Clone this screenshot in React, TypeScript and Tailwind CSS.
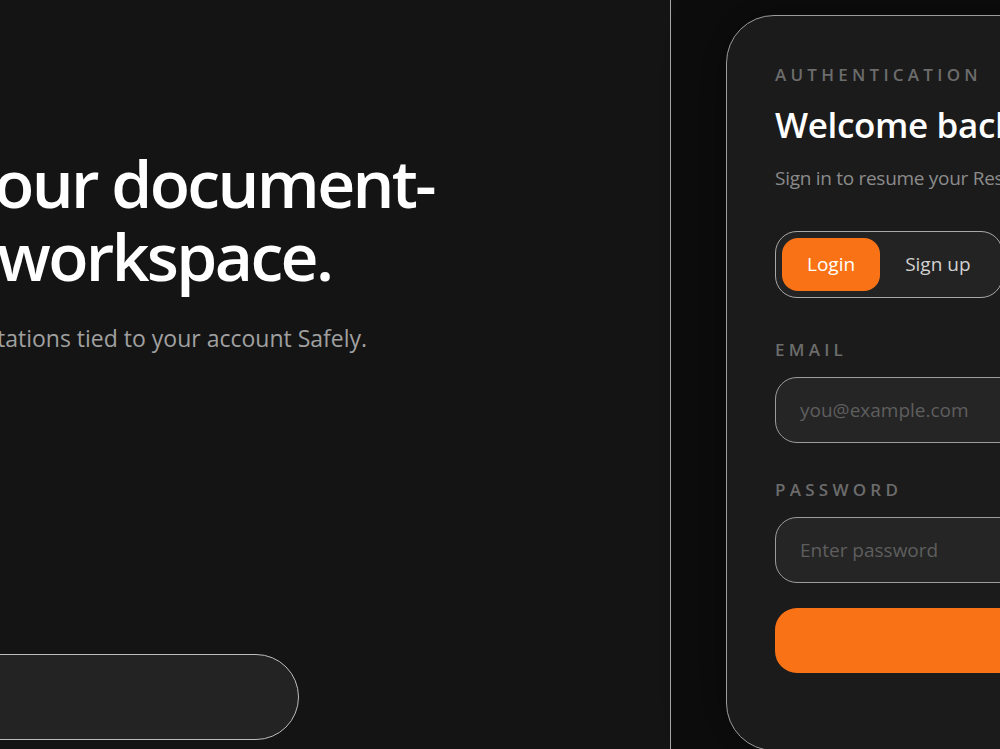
import type { ReactNode } from 'react';

const font = { fontFamily: '"Open Sans", "Noto Sans", sans-serif' };

// a line whose start runs off the left edge of the page
function Bleed({ hidden, children, className }: { hidden: string; children: ReactNode; className?: string }) {
  return (
    <div className={`flex whitespace-nowrap ${className ?? ''}`}>
      <span className="flex w-[420px] shrink-0 justify-end">{hidden}</span>
      <span>{children}</span>
    </div>
  );
}

function Label({ children }: { children: ReactNode }) {
  return (
    <p className="text-[17px] font-semibold uppercase leading-[20px] tracking-[0.25em] text-[#6c6c6c]">{children}</p>
  );
}

export default function App() {
  return (
    <div className="flex h-[749px] w-[1000px] overflow-hidden bg-[#0d0d0d]" style={font}>
      {/* Left: hero */}
      <section className="flex w-[671px] shrink-0 flex-col border-r border-[#a6a6a6] bg-[#141414]">
        <div className="-ml-[423px] pt-[146px]">
          <Bleed hidden="Return to y" className="text-[66px] font-semibold leading-[73px] tracking-[-0.04em] text-white">
            <span className="-ml-[3px]">our document-</span>
          </Bleed>
          <Bleed hidden="heavy " className="text-[66px] font-semibold leading-[73px] tracking-[-0.04em] text-white">
            workspace.
          </Bleed>
          <Bleed hidden="Pick up files and presen" className="mt-[30px] text-[23px] leading-[32px] text-[#a0a0a0]">
            tations tied to your account Safely.
          </Bleed>
        </div>

        <div className="mb-[9px] mt-auto -ml-[60px] h-[86px] w-[359px] rounded-full border border-[#bdbdbd] bg-[#232323]" />
      </section>

      {/* Right: auth card */}
      <main className="flex-1 pl-[55px] pt-[15px]">
        <div className="h-[736px] w-[640px] rounded-[48px] border border-[#9c9c9c] bg-[#1b1b1b] px-[48px] pt-[49px] shadow-[0_0_60px_rgba(0,0,0,0.45)]">
          <Label>Authentication</Label>
          <h2 className="mt-[18px] text-[35px] font-semibold leading-[44px] tracking-[-0.01em] text-white">
            Welcome back
          </h2>
          <p className="mt-[17px] text-[19px] leading-[28px] tracking-[-0.015em] text-[#8b8b8b]">
            Sign in to resume your Research workspace.
          </p>

          <div className="mt-[39px] inline-flex rounded-[22px] border border-[#a8a8a8] bg-[#232323] p-[6px]">
            <button className="h-[53px] rounded-[16px] bg-[#f97316] px-[25px] text-[19px] text-white">Login</button>
            <button className="h-[53px] rounded-[16px] px-[25px] text-[19px] text-[#d2d2d2]">Sign up</button>
          </div>

          <div className="mt-[42px]">
            <Label>Email</Label>
            <input
              type="email"
              placeholder="you@example.com"
              className="mt-[17px] h-[66px] w-full rounded-[22px] border border-[#9c9c9c] bg-[#252525] px-[24px] text-[19px] text-white outline-none placeholder:text-[#5e5e5e]"
              style={font}
            />
          </div>

          <div className="mt-[37px]">
            <Label>Password</Label>
            <input
              type="password"
              placeholder="Enter password"
              className="mt-[17px] h-[66px] w-full rounded-[22px] border border-[#9c9c9c] bg-[#252525] px-[24px] text-[19px] text-white outline-none placeholder:text-[#5e5e5e]"
              style={font}
            />
          </div>

          <button className="mt-[25px] h-[65px] w-full rounded-[22px] bg-[#f97316] text-[19px] font-semibold text-white">
            Sign in
          </button>
        </div>
      </main>
    </div>
  );
}
